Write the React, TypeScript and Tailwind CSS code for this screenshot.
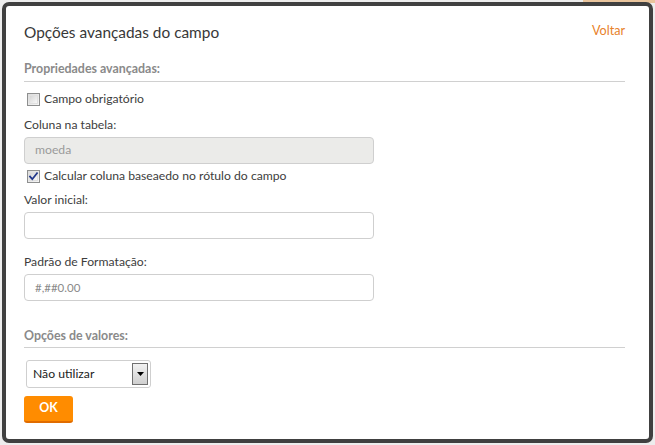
import React from "react";

const font = { fontFamily: "Lato, 'Open Sans', 'Noto Sans', sans-serif" };

function Box({ checked }: { checked?: boolean }) {
  return (
    <span className="relative inline-flex h-[13px] w-[13px] shrink-0 items-center justify-center border border-[#8e8f8f] bg-gradient-to-br from-[#dcdcdc] to-[#f6f6f6]">
      <span className="absolute inset-[1px] border border-[#e0e0e0] bg-gradient-to-br from-[#d6d6d6] to-[#f8f8f8]" />
      {checked && (
        <svg className="relative" width="11" height="11" viewBox="0 0 11 11">
          <path d="M2 5.5 L4.3 8.2 L9 2.2" fill="none" stroke="#21378a" strokeWidth="1.8" strokeLinecap="square" />
        </svg>
      )}
    </span>
  );
}

export default function App() {
  return (
    <div className="relative h-[445px] w-[655px] overflow-hidden bg-[#ededed]" style={font}>
      <div className="absolute right-0 top-0 h-[3px] w-[72px] bg-[#e9c49c]" />
      <div className="absolute left-[2px] top-[2px] h-[441px] w-[651px] rounded-[7px] border-4 border-[#404040] bg-white">
        <div className="flex flex-col pl-[18px] pr-[24px] pt-[15px] text-[12.2px] text-[#3d3d3d]">
          <div className="flex items-start justify-between">
            <div className="text-[15.4px] leading-[22px] text-[#383838]">Opções avançadas do campo</div>
            <div className="mt-[1px] text-[12.6px] leading-[18px] text-[#e8822a]">Voltar</div>
          </div>

          <div className="mt-[17px] border-b border-[#d0d0d0] pb-[3px] text-[12.4px] font-bold leading-[18px] text-[#8a8a8a]">
            Propriedades avançadas:
          </div>

          <label className="mt-[8px] flex items-center gap-[4px] pl-[3px] leading-[18px]">
            <Box />
            <span>Campo obrigatório</span>
          </label>

          <div className="mt-[8px] leading-[18px]">Coluna na tabela:</div>
          <div className="mt-[3px] flex h-[27px] w-[350px] items-center rounded-[4px] border border-[#cfcfcf] bg-[#ebebe9] px-[10px] text-[#9a9a9a]">
            moeda
          </div>

          <label className="mt-[3px] flex items-center gap-[4px] pl-[3px] leading-[18px]">
            <Box checked />
            <span>Calcular coluna baseaedo no rótulo do campo</span>
          </label>

          <div className="mt-[6px] leading-[18px]">Valor inicial:</div>
          <div className="mt-[3px] h-[27px] w-[350px] rounded-[4px] border border-[#cfcfcf] bg-white" />

          <div className="mt-[14px] leading-[18px]">Padrão de Formatação:</div>
          <div className="mt-[3px] flex h-[27px] w-[350px] items-center rounded-[4px] border border-[#cfcfcf] bg-white px-[10px] text-[11.5px] text-[#8a8a8a]">
            #,##0.00
          </div>

          <div className="mt-[26px] border-b border-[#d0d0d0] pb-[2px] text-[12.4px] font-bold leading-[18px] text-[#8a8a8a]">
            Opções de valores:
          </div>

          <div className="ml-[2px] mt-[12px] flex h-[28px] w-[125px] items-center justify-between rounded-[3px] border border-[#cfcfcf] bg-white pl-[6px] pr-[2px]">
            <span className="text-[12.2px] text-[#222]">Não utilizar</span>
            <span className="flex h-[22px] w-[16px] items-center justify-center border border-[#707070] bg-gradient-to-b from-[#f2f2f2] to-[#cfcfcf]">
              <svg width="7" height="4" viewBox="0 0 7 4">
                <path d="M0 0 H7 L3.5 4 Z" fill="#000" />
              </svg>
            </span>
          </div>

          <button className="mt-[8px] flex h-[27px] w-[49px] items-center justify-center rounded-[3px] border-b-2 border-[#e06c00] bg-[#ff8c00] text-[12.4px] font-bold text-white">
            OK
          </button>
        </div>
      </div>
    </div>
  );
}
